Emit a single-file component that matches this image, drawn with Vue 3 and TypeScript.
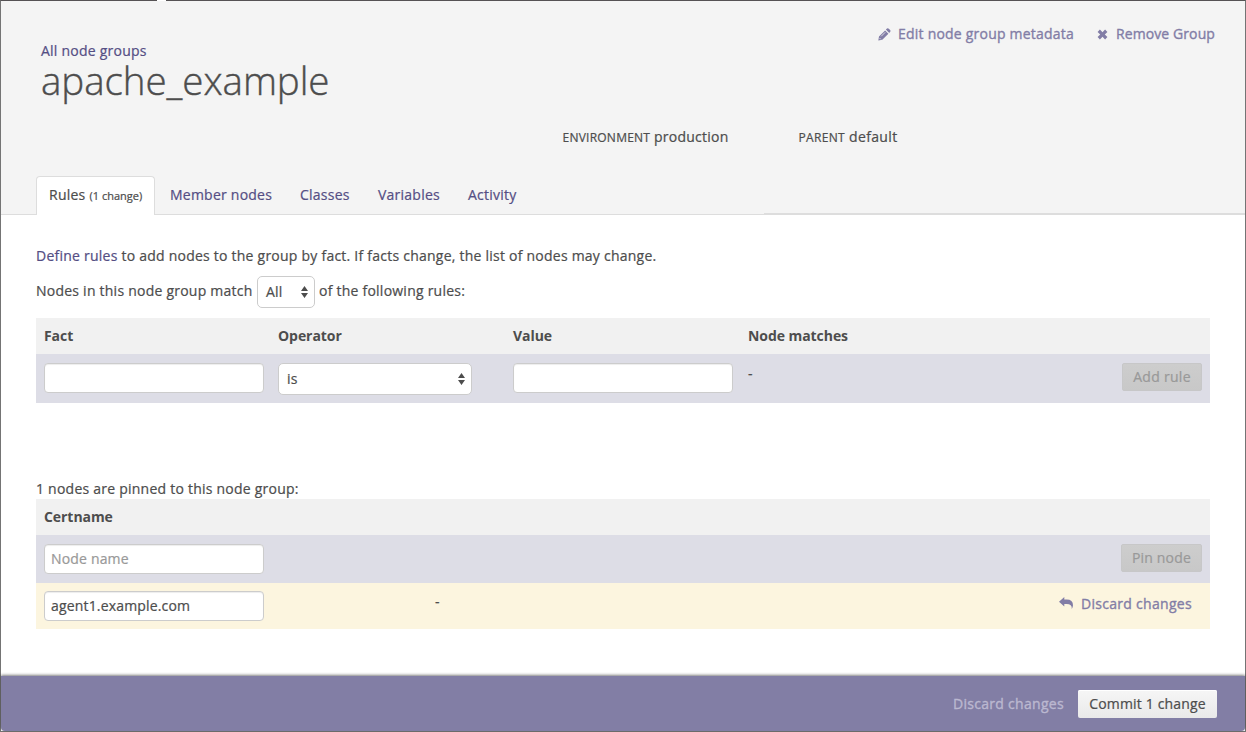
<script setup lang="ts">
import { ref } from 'vue'

interface Tab {
  label: string
  width: number
  note?: string
}

const tabs: Tab[] = [
  { label: 'Rules', note: '(1 change)', width: 119 },
  { label: 'Member nodes', width: 130 },
  { label: 'Classes', width: 78 },
  { label: 'Variables', width: 90 },
  { label: 'Activity', width: 76 },
]
const activeTab = ref('Rules')
const fact = ref('')
const value = ref('')
const nodeName = ref('')
const certname = ref('agent1.example.com')
</script>

<template>
  <div class="window">
    <i class="notch"></i>
    <header class="header">
      <div class="titles">
        <a class="crumb">All node groups</a>
        <h1>apache_example</h1>
      </div>
      <div class="actions">
        <a class="action edit">
          <svg width="13" height="13" viewBox="0 0 13 13"><path d="M.3 12.5 1 8.5 7.1 2.4 10.4 5.7 4.3 11.8Z M7.9 1.6 9 .6Q9.9-.1 10.8.7L12.1 2Q12.9 2.9 12.2 3.8L11.2 4.9Z" /><path class="shine" d="M3.2 8.3 7.2 4.3M1.5 10 2.8 11.3" /></svg>
          <span>Edit node group metadata</span>
        </a>
        <a class="action remove">
          <svg width="11" height="11" viewBox="0 0 11 11"><path d="M2.9.6 5.5 3.2 8.1.6 10.4 2.9 7.8 5.5 10.4 8.1 8.1 10.4 5.5 7.8 2.9 10.4.6 8.1 3.2 5.5.6 2.9Z" /></svg>
          <span>Remove Group</span>
        </a>
      </div>
      <div class="meta">
        <div class="environment"><small>ENVIRONMENT</small> <span>production</span></div>
        <div class="parent"><small>PARENT</small> <span>default</span></div>
      </div>
      <nav class="tabs">
        <a
          v-for="tab in tabs"
          :key="tab.label"
          class="tab"
          :class="{ active: tab.label === activeTab }"
          :style="{ width: tab.width + 'px' }"
          @click="activeTab = tab.label"
        >{{ tab.label }}<small v-if="tab.note">{{ tab.note }}</small></a>
        <i class="tab-rule"></i>
      </nav>
    </header>

    <main>
      <p class="intro"><a>Define rules</a> to add nodes to the group by fact. If facts change, the list of nodes may change.</p>
      <div class="match">
        <span class="before">Nodes in this node group match</span>
        <div class="select small-select">
          <span>All</span>
          <svg width="7" height="12" viewBox="0 0 7 12"><path d="M3.5 0 7 5H0ZM0 7H7L3.5 12Z" /></svg>
        </div>
        <span class="after">of the following rules:</span>
      </div>

      <section class="grid rules">
        <div class="row head"><b>Fact</b><b>Operator</b><b>Value</b><b>Node matches</b></div>
        <div class="row entry">
          <input v-model="fact" aria-label="Fact">
          <div class="select">
            <span>is</span>
            <svg width="7" height="12" viewBox="0 0 7 12"><path d="M3.5 0 7 5H0ZM0 7H7L3.5 12Z" /></svg>
          </div>
          <input v-model="value" aria-label="Value">
          <span class="dash">-</span>
          <button class="disabled add" disabled>Add rule</button>
        </div>
      </section>

      <p class="pinned">1 nodes are pinned to this node group:</p>
      <section class="grid nodes">
        <div class="row head"><b>Certname</b></div>
        <div class="row entry">
          <input v-model="nodeName" placeholder="Node name">
          <span></span>
          <button class="disabled pin" disabled>Pin node</button>
        </div>
        <div class="row changed">
          <input v-model="certname" aria-label="Certname">
          <span class="dash">-</span>
          <a class="action undo">
            <svg width="14" height="12" viewBox="0 0 14 12"><path d="M5.3 0V2.6H7.6Q14 2.6 14 8.2 14 10 12.8 12 13.2 6.9 7.6 6.9H5.3V9.5L0 4.7Z" /></svg>
            <span>Discard changes</span>
          </a>
        </div>
      </section>
    </main>

    <footer>
      <a class="discard">Discard changes</a>
      <button class="commit">Commit 1 change</button>
    </footer>
  </div>
</template>

<style>
body {
  margin: 0;
  background: #fff;
}
</style>

<style scoped>
* {
  box-sizing: border-box;
}
.window {
  position: relative;
  display: flex;
  flex-direction: column;
  width: 1246px;
  height: 732px;
  border: 1px solid #747474;
  border-top-color: #555254;
  background: #fff;
  color: #4d4d4d;
  font: 14px/20px "Open Sans", sans-serif;
  letter-spacing: 0.235px;
  -webkit-text-stroke: 0.22px;
}
.notch {
  position: absolute;
  top: -1px;
  left: 156px;
  width: 9px;
  height: 1px;
  background: #fff;
}
a {
  color: #544e84;
  white-space: nowrap;
}
input,
button {
  font: inherit;
  color: inherit;
  letter-spacing: 0.17px;
}
.header {
  display: grid;
  grid-template-columns: 1fr auto;
  grid-template-rows: 126px 49px 39px;
  flex: none;
  height: 214px;
  background: #f4f4f4;
}
.titles {
  padding: 40px 0 0 40px;
}
.crumb {
  display: block;
  height: 17px;
}
h1 {
  margin: 0;
  font-size: 38.5px;
  line-height: 44px;
  font-weight: 300;
  letter-spacing: -0.05px;
  -webkit-text-stroke: 0.4px;
}
.actions {
  display: flex;
  padding: 23px 30px 0 0;
}
.action {
  display: flex;
  height: 20px;
  color: #827da6;
  -webkit-text-stroke: 0.35px;
}
.action svg {
  flex: none;
  fill: #827da6;
}
.edit svg {
  margin: 4px 7px 0 0;
}
.edit {
  margin-right: 23px;
  letter-spacing: 0.21px;
}
.remove {
  letter-spacing: 0.1px;
}
.remove svg {
  margin: 5px 8px 0 0;
}
.shine {
  fill: none;
  stroke: #f4f4f4;
  stroke-width: 0.8;
}
.meta {
  grid-column: 1 / 3;
  display: flex;
  padding-left: 561.5px;
}
.meta small {
  font-size: 12px;
}
.environment {
  width: 236px;
}
.parent {
  letter-spacing: 0.34px;
}
.tabs {
  grid-column: 1 / 3;
  display: flex;
  padding-left: 35px;
  background: linear-gradient(#ddd, #ddd) bottom / 100% 1px no-repeat;
}
.tab {
  padding: 9px 0 0 15px;
}
.tab.active {
  padding: 8px 0 0 12px;
  border: 1px solid #ddd;
  border-bottom: 0;
  border-radius: 4px 4px 0 0;
  background: #fff;
  color: #4d4d4d;
}
.tab small {
  margin-left: 4px;
  font-size: 11px;
  letter-spacing: 0;
}
.tab-rule {
  align-self: flex-end;
  width: 481px;
  height: 2px;
  margin-left: auto;
  background: #ddd;
}
main {
  flex: 1;
  padding: 31px 35px 0;
}
p {
  margin: 0;
}
.match {
  display: flex;
  height: 32px;
  margin: 10px 0;
  line-height: 30px;
}
.before {
  width: 221px;
}
.after {
  margin-left: 4px;
}
.select {
  display: flex;
  align-items: center;
  justify-content: space-between;
  width: 194px;
  height: 32px;
  padding: 0 6px 0 8px;
  border: 1px solid #ccc;
  border-radius: 5px;
  background: #fff;
}
.select svg {
  fill: #4d4d4d;
}
.small-select {
  width: 58px;
}
.row {
  display: grid;
  grid-template-columns: 234px 235px 235px 1fr auto;
  align-items: start;
  padding: 9px 8px 0;
}
.nodes .row {
  grid-template-columns: 391px 1fr auto;
}
.head {
  height: 36px;
  padding-top: 8px;
  background: #f1f1f1;
}
.head b {
  font-weight: 700;
  letter-spacing: -0.06px;
  -webkit-text-stroke: 0;
}
.entry {
  height: 49px;
  background: #dddde6;
}
.nodes .entry {
  height: 48px;
}
.changed {
  height: 46px;
  padding-top: 8px;
  background: #fcf5df;
}
input {
  width: 220px;
  height: 30px;
  padding: 0 6px 2px;
  border: 1px solid #ccc;
  border-radius: 4px;
  background: #fff;
  box-shadow: inset 0 1px 1px rgba(0, 0, 0, 0.075);
  outline: none;
}
input::placeholder {
  color: #999;
  opacity: 1;
}
.dash {
  padding-top: 1px;
}
.changed .dash {
  padding-top: 0;
  margin-top: 1px;
}
button {
  height: 28px;
  padding: 0;
  border: 0;
  border-radius: 2px;
  line-height: 28px;
}
.disabled {
  border: 1px solid #c7c7c8;
  background: linear-gradient(#cdcdcd, #c8c8c8);
  color: #999;
  line-height: 26px;
}
.add {
  width: 80px;
  letter-spacing: 0.3px;
}
.pin {
  width: 81px;
}
.pinned {
  margin-top: 76px;
}
.undo {
  margin: 3px 10px 0 0;
  letter-spacing: 0.3px;
}
.undo svg {
  margin: 3px 8px 0 0;
}
footer {
  display: flex;
  flex: none;
  align-items: flex-start;
  justify-content: flex-end;
  height: 55px;
  padding: 14px 28px 0 0;
  border-radius: 0 0 4px 4px;
  background: #827ea5;
  box-shadow: 0 -1px 3px rgba(0, 0, 0, 0.5);
}
.discard {
  margin: 4px 14px 0 0;
  color: #bbb8d0;
  letter-spacing: 0.3px;
  -webkit-text-stroke: 0.35px;
}
.commit {
  width: 139px;
  background: linear-gradient(#f6f6f6, #e9e9e9);
  box-shadow: inset 0 1px #fff;
}
</style>
